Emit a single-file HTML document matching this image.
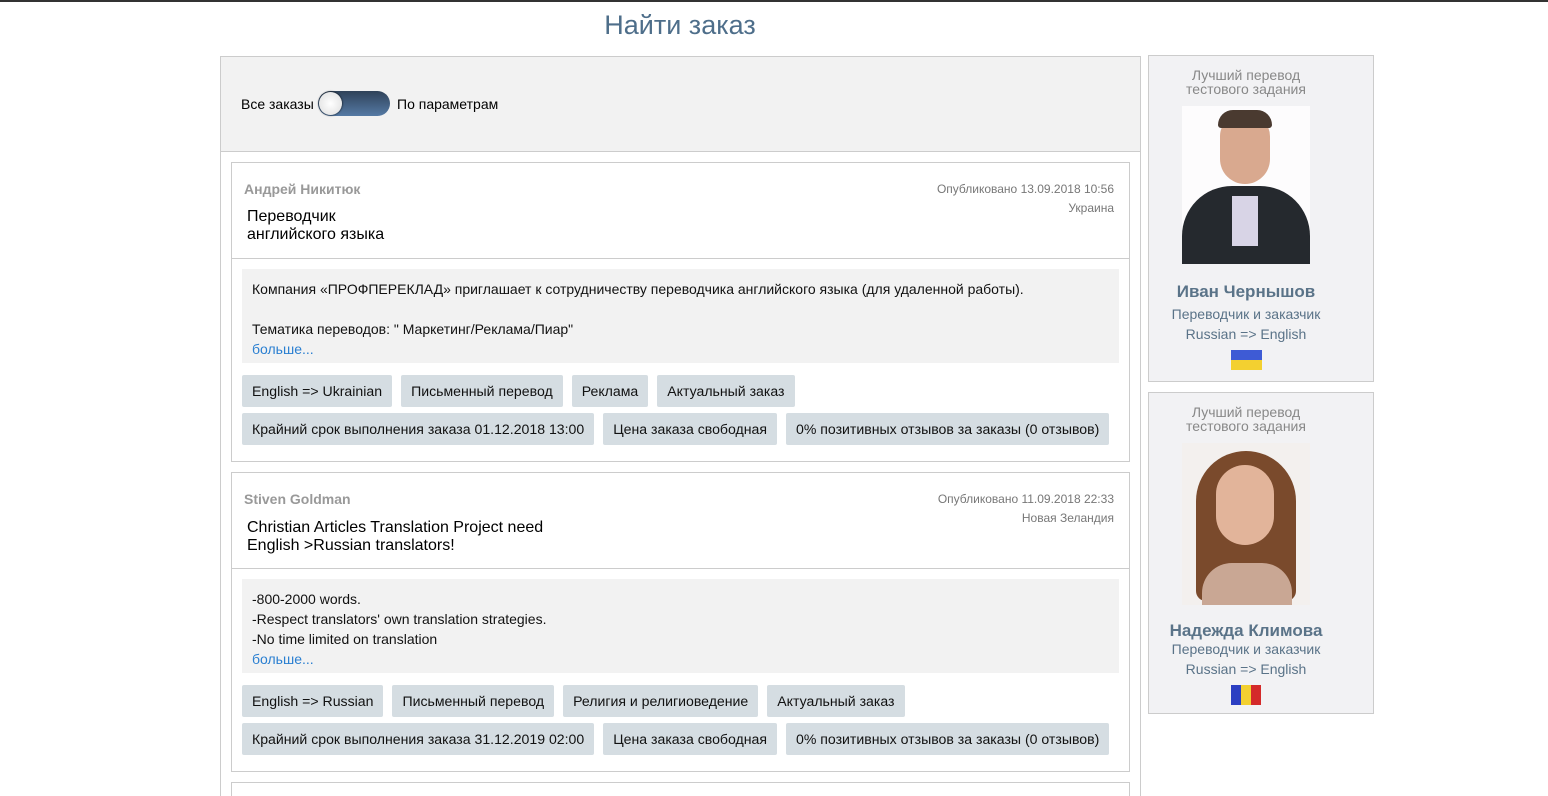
<!DOCTYPE html>
<html><head><meta charset="utf-8"><style>
html,body{margin:0;width:1548px;height:796px;overflow:hidden}
body{background:#fff;font-family:"Liberation Sans",Arial,sans-serif;position:relative}
.abs{position:absolute}
.topbar{left:0;top:0;width:1548px;height:2px;background:#333}
h1{position:absolute;left:0;width:1360px;top:10px;margin:0;text-align:center;font-weight:normal;font-size:27px;color:#4e6e8a}
.main{left:220px;top:56px;width:919px;height:739px;border:1px solid #ccc;border-bottom:none;overflow:hidden}
.filter{left:0;top:0;width:919px;height:94px;background:#f2f2f2;border-bottom:1px solid #ccc;font-size:14px}
.toggle{position:absolute;left:97px;top:34px;width:72px;height:25px;border-radius:13px;background:linear-gradient(#2f4259,#557aa5)}
.knob{position:absolute;left:1px;top:1px;width:23px;height:23px;border-radius:50%;background:radial-gradient(#fff,#ddd);box-shadow:0 0 2px #000}
.card{position:absolute;left:10px;width:897px;height:298px;border:1px solid #ccc;background:#fff}
.author{position:absolute;left:12px;top:18px;font-size:14px;color:#999;font-weight:bold}
.meta{position:absolute;right:15px;top:17px;font-size:12px;color:#777;text-align:right;line-height:19px}
.title{position:absolute;left:15px;top:45px;font-size:16px;color:#000;line-height:18px}
.sep{position:absolute;left:0;top:95px;width:897px;height:1px;background:#ccc}
.desc{position:absolute;left:10px;top:106px;width:857px;height:74px;background:#f2f2f2;padding:10px;font-size:14px;line-height:20px;color:#111}
.desc a{color:#2a7fd1;text-decoration:none}
.tags{position:absolute;left:10px;font-size:14.1px}
.tag{display:inline-block;background:#d5dde2;padding:0 10px;height:32px;line-height:32px;margin-right:5px;color:#111;border-radius:2px}
.side{position:absolute;left:1148px;width:194px;padding-right:30px;background:#f2f2f4;border:1px solid #ccc;text-align:center;color:#888}
.side .h{font-size:14px;line-height:14px;margin-top:12px;color:#888}
.side .n{font-size:17px;font-weight:bold;color:#5a7388}
.side .r{font-size:14px;color:#5a7388}
</style></head><body>
<div class="abs topbar"></div>
<h1>Найти заказ</h1>
<div class="abs main">
 <div class="abs filter"><span class="abs" style="left:20px;top:39px">Все заказы</span><div class="toggle"><div class="knob"></div></div><span class="abs" style="left:176px;top:39px">По параметрам</span></div>
 <div class="card" style="top:105px">
  <div class="author">Андрей Никитюк</div>
  <div class="meta">Опубликовано 13.09.2018 10:56<br>Украина</div>
  <div class="title">Переводчик<br>английского языка</div>
  <div class="sep"></div>
  <div class="desc">Компания «ПРОФПЕРЕКЛАД» приглашает к сотрудничеству переводчика английского языка (для удаленной работы).<br><br>Тематика переводов: " Маркетинг/Реклама/Пиар"<br><a>больше...</a></div>
  <div class="tags" style="top:212px"><span class="tag">English =&gt; Ukrainian</span><span class="tag" style="margin-left:4px">Письменный перевод</span><span class="tag" style="margin-left:4px">Реклама</span><span class="tag" style="margin-left:4px">Актуальный заказ</span></div>
  <div class="tags" style="top:250px"><span class="tag">Крайний срок выполнения заказа 01.12.2018 13:00</span><span class="tag" style="margin-left:4px">Цена заказа свободная</span><span class="tag" style="margin-left:4px">0% позитивных отзывов за заказы (0 отзывов)</span></div>
 </div>
 <div class="card" style="top:415px">
  <div class="author">Stiven Goldman</div>
  <div class="meta">Опубликовано 11.09.2018 22:33<br>Новая Зеландия</div>
  <div class="title" style="top:46px">Christian Articles Translation Project need<br>English &gt;Russian translators!</div>
  <div class="sep"></div>
  <div class="desc">-800-2000 words.<br>-Respect translators' own translation strategies.<br>-No time limited on translation<br><a>больше...</a></div>
  <div class="tags" style="top:212px"><span class="tag">English =&gt; Russian</span><span class="tag" style="margin-left:4px">Письменный перевод</span><span class="tag" style="margin-left:4px">Религия и религиоведение</span><span class="tag" style="margin-left:4px">Актуальный заказ</span></div>
  <div class="tags" style="top:250px"><span class="tag">Крайний срок выполнения заказа 31.12.2019 02:00</span><span class="tag" style="margin-left:4px">Цена заказа свободная</span><span class="tag" style="margin-left:4px">0% позитивных отзывов за заказы (0 отзывов)</span></div>
 </div>
 <div class="card" style="top:725px;height:20px"></div>
</div>
<div class="side" style="top:55px;height:325px">
 <div class="h">Лучший перевод<br>тестового задания</div>
 <div style="margin:10px auto 0;width:128px;height:158px;background:#fdfcfd;position:relative;overflow:hidden">
  <div class="abs" style="left:0;top:80px;width:128px;height:78px;background:#25292e;border-radius:50px 50px 0 0"></div>
  <div class="abs" style="left:50px;top:90px;width:26px;height:50px;background:#d8d4e6"></div>
  <div class="abs" style="left:38px;top:8px;width:50px;height:70px;background:#d9a98f;border-radius:25px 25px 28px 28px"></div>
  <div class="abs" style="left:36px;top:4px;width:54px;height:18px;background:#4a3a30;border-radius:25px 25px 5px 5px"></div>
 </div>
 <div class="n" style="margin-top:18px">Иван Чернышов</div>
 <div class="r" style="margin-top:4px">Переводчик и заказчик</div>
 <div class="r" style="margin-top:4px">Russian =&gt; English</div>
 <div style="margin:8px auto 0;width:31px;height:20px;background:linear-gradient(#3e5bd5 50%,#f3d030 50%)"></div>
</div>
<div class="side" style="top:392px;height:320px">
 <div class="h">Лучший перевод<br>тестового задания</div>
 <div style="margin:10px auto 0;width:128px;height:162px;background:#f3f0ee;position:relative;overflow:hidden">
  <div class="abs" style="left:14px;top:8px;width:100px;height:150px;background:#7a4a2c;border-radius:50px 50px 10px 10px"></div>
  <div class="abs" style="left:34px;top:22px;width:58px;height:80px;background:#e2b49a;border-radius:29px"></div>
  <div class="abs" style="left:20px;top:120px;width:90px;height:42px;background:#c9a794;border-radius:30px 30px 0 0"></div>
 </div>
 <div class="n" style="margin-top:16px">Надежда Климова</div>
 <div class="r">Переводчик и заказчик</div>
 <div class="r" style="margin-top:4px">Russian =&gt; English</div>
 <div style="margin:8px auto 0;width:30px;height:20px;background:linear-gradient(90deg,#2c3fc2 33%,#f3d030 33% 66%,#d42a2a 66%)"></div>
</div>
</body></html>
